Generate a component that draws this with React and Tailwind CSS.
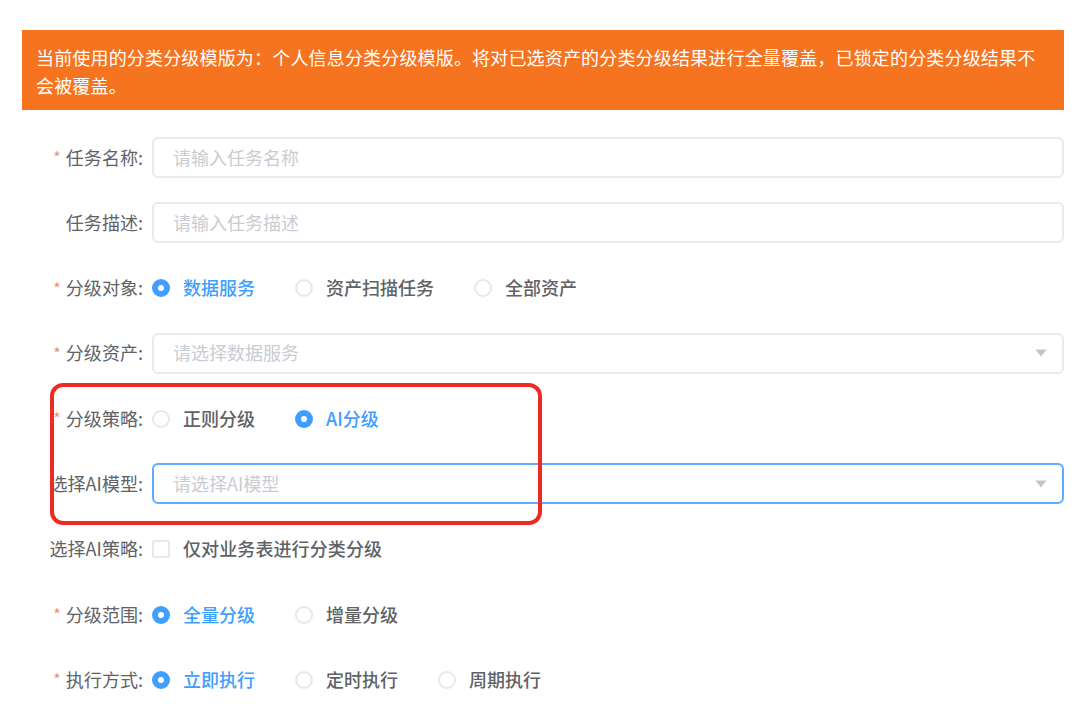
import React from "react";

const FONT = "font-['Noto_Sans_CJK_SC','Noto_Sans',sans-serif]";

const Label = ({ required, children }) => (
  <label className="flex w-[130px] shrink-0 items-center justify-end whitespace-nowrap pb-[1px] pr-[9px] text-[18px] tracking-[0.03px] text-[#606266]">
    {required && <span className="mr-[5px] text-[16px] leading-none text-[#f78989]">*</span>}
    {children}:
  </label>
);

const Field = ({ placeholder, select, focused }) => (
  <div
    className={`flex h-[41px] flex-1 items-center justify-between rounded-[6px] border-2 bg-white pl-[19px] pr-[15px] text-[18px] text-[#c8ccd3] ${
      focused ? "border-[#5eacfd]" : "border-[#e8eaef]"
    }`}
  >
    <span className="pb-[1px]">{placeholder}</span>
    {select && (
      <svg width="12" height="8" viewBox="0 0 12 8">
        <path d="M0.5 0.5h11L6 7.5z" fill="#c0c4cc" />
      </svg>
    )}
  </div>
);

const Radio = ({ text, checked }) => (
  <div className="mr-[40px] flex items-center gap-[13px]">
    {checked ? (
      <span className="flex h-[18px] w-[18px] items-center justify-center rounded-full bg-[#409eff]">
        <span className="h-[6px] w-[6px] rounded-full bg-white" />
      </span>
    ) : (
      <span className="h-[18px] w-[18px] rounded-full border-2 border-[#e6e8ee] bg-white" />
    )}
    <span className={`pb-[1px] text-[18px] font-medium ${checked ? "text-[#409eff]" : "text-[#606266]"}`}>{text}</span>
  </div>
);

const Row = ({ label, required, children }) => (
  <div className="flex h-[41px] items-center">
    <Label required={required}>{label}</Label>
    {children}
  </div>
);

const App = () => {
  return (
    <div className={`relative h-[704px] w-[1080px] overflow-hidden bg-white pl-[22px] pr-[16px] pt-[30px] ${FONT}`}>
      <div className="h-[80px] bg-[#f67320] pl-[14px] pr-[28px] pt-[13px] text-[18px] leading-[28px] tracking-[0.17px] text-white">
        当前使用的分类分级模版为：个人信息分类分级模版。将对已选资产的分类分级结果进行全量覆盖，已锁定的分类分级结果不会被覆盖。
      </div>

      <div className="mt-[27px] flex flex-col gap-[24.3px]">
        <Row label="任务名称" required>
          <Field placeholder="请输入任务名称" />
        </Row>
        <Row label="任务描述">
          <Field placeholder="请输入任务描述" />
        </Row>
        <Row label="分级对象" required>
          <Radio text="数据服务" checked />
          <Radio text="资产扫描任务" />
          <Radio text="全部资产" />
        </Row>
        <Row label="分级资产" required>
          <Field placeholder="请选择数据服务" select />
        </Row>
        <Row label="分级策略" required>
          <Radio text="正则分级" />
          <Radio text="AI分级" checked />
        </Row>
        <Row label="选择AI模型">
          <Field placeholder="请选择AI模型" select focused />
        </Row>
        <Row label="选择AI策略">
          <div className="flex items-center gap-[13px]">
            <span className="h-[18px] w-[18px] rounded-[2px] border-2 border-[#e6e8ee] bg-white" />
            <span className="pb-[1px] text-[18px] font-medium tracking-[0.1px] text-[#606266]">仅对业务表进行分类分级</span>
          </div>
        </Row>
        <Row label="分级范围" required>
          <Radio text="全量分级" checked />
          <Radio text="增量分级" />
        </Row>
        <Row label="执行方式" required>
          <Radio text="立即执行" checked />
          <Radio text="定时执行" />
          <Radio text="周期执行" />
        </Row>
      </div>

      {/* red highlight drawn over the two AI rows */}
      <div className="pointer-events-none absolute left-[50px] top-[383px] h-[142px] w-[492px] rounded-[13px] border-[4px] border-[#ee2a24]" />
    </div>
  );
};

export default App;
